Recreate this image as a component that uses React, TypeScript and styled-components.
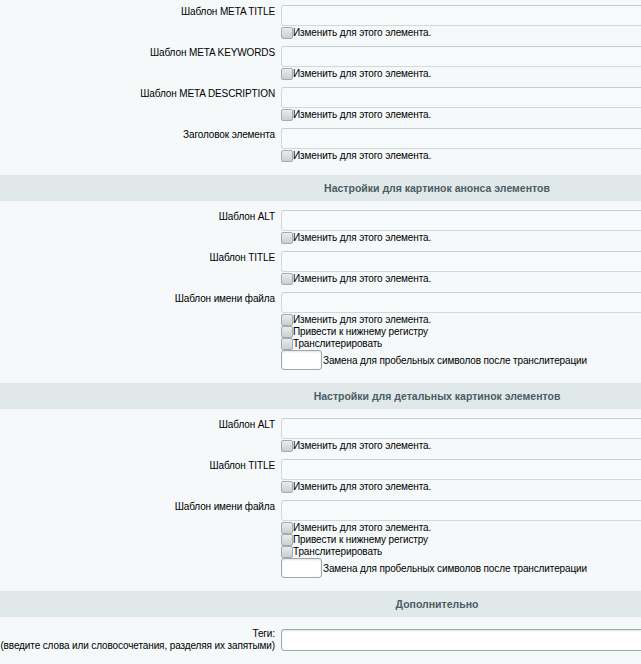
import React from "react";
import styled, { createGlobalStyle } from "styled-components";

const GlobalStyle = createGlobalStyle`
  html, body {
    margin: 0;
    padding: 0;
    background: #f5f9f9;
    overflow: hidden;
  }
  body {
    font-family: "Liberation Sans", Arial, Helvetica, sans-serif;
    font-size: 10px;
    letter-spacing: -0.12px;
    color: #000;
  }
`;

const Form = styled.div`
  width: 874px;
  display: flex;
  flex-direction: column;
`;

const Section = styled.section`
  display: flex;
  flex-direction: column;
  padding-bottom: 11px;
`;

const SectionHeader = styled.div`
  height: 26px;
  margin-bottom: 4px;
  background: #e0e8ea;
  color: #4b5d62;
  font-weight: bold;
  font-size: 10.5px;
  letter-spacing: 0;
  display: flex;
  align-items: center;
  justify-content: center;
`;

const Row = styled.div<{ $center?: boolean }>`
  display: grid;
  grid-template-columns: 281px 1fr;
  align-items: ${(p) => (p.$center ? "center" : "start")};
  padding-top: ${(p) => (p.$center ? "7px" : "0")};
`;

const LabelCell = styled.div<{ $center?: boolean }>`
  text-align: right;
  padding: ${(p) => (p.$center ? "0 6px 0 0" : "6px 6px 0 0")};
  line-height: ${(p) => (p.$center ? "12px" : "12px")};
  white-space: nowrap;
`;

const ValueCell = styled.div<{ $center?: boolean }>`
  display: flex;
  flex-direction: column;
  padding: ${(p) => (p.$center ? "0" : "5px 0 2px")};
`;

const TextInput = styled.input<{ $size?: "wide" | "small" | "tags" }>`
  box-sizing: border-box;
  margin: 0;
  font: inherit;
  padding: 0 4px;
  border-radius: 3px;
  ${(p) =>
    p.$size === "small"
      ? `
    width: 41px;
    height: 20px;
    background: #fff;
    border: 1px solid #9ea7ac;
    box-shadow: inset 0 1px 2px rgba(160,170,175,0.35);
  `
      : p.$size === "tags"
      ? `
    width: 560px;
    height: 22px;
    background: #fff;
    border: 1px solid #9ea7ac;
    box-shadow: inset 0 1px 2px rgba(160,170,175,0.35);
  `
      : `
    width: 560px;
    height: 21px;
    background: #f7fafa;
    border: 1px solid #d2d7da;
    border-top-color: #c8cdd1;
  `}
`;

const CheckLine = styled.label<{ $first?: boolean }>`
  display: flex;
  align-items: center;
  height: 12px;
  margin-top: ${(p) => (p.$first ? "1px" : "0")};
  line-height: 12px;
  white-space: nowrap;
`;

const CheckBox = styled.input.attrs({ type: "checkbox" })`
  appearance: none;
  box-sizing: border-box;
  width: 12px;
  height: 12px;
  margin: 0;
  flex: none;
  border: 1px solid #a3abb0;
  border-radius: 2px;
  background: linear-gradient(#e8ecee, #c9cfd2);
`;

const ReplaceLine = styled.div`
  display: flex;
  align-items: center;
  height: 20px;
  white-space: nowrap;
  gap: 1px;
`;

type FieldProps = {
  label: string;
  extra?: boolean;
};

const Field = ({ label, extra }: FieldProps) => (
  <Row>
    <LabelCell>{label}</LabelCell>
    <ValueCell>
      <TextInput $size="wide" disabled />
      <CheckLine $first>
        <CheckBox />
        Изменить для этого элемента.
      </CheckLine>
      {extra && (
        <>
          <CheckLine>
            <CheckBox />
            Привести к нижнему регистру
          </CheckLine>
          <CheckLine>
            <CheckBox />
            Транслитерировать
          </CheckLine>
          <ReplaceLine>
            <TextInput $size="small" />
            Замена для пробельных символов после транслитерации
          </ReplaceLine>
        </>
      )}
    </ValueCell>
  </Row>
);

const PictureSection = ({ title }: { title: string }) => (
  <Section>
    <SectionHeader>{title}</SectionHeader>
    <Field label="Шаблон ALT" />
    <Field label="Шаблон TITLE" />
    <Field label="Шаблон имени файла" extra />
  </Section>
);

export default function App() {
  return (
    <>
      <GlobalStyle />
      <Form>
        <Section>
          <Field label="Шаблон META TITLE" />
          <Field label="Шаблон META KEYWORDS" />
          <Field label="Шаблон META DESCRIPTION" />
          <Field label="Заголовок элемента" />
        </Section>
        <PictureSection title="Настройки для картинок анонса элементов" />
        <PictureSection title="Настройки для детальных картинок элементов" />
        <Section>
          <SectionHeader>Дополнительно</SectionHeader>
          <Row $center>
            <LabelCell $center>
              Теги:
              <br />
              (введите слова или словосочетания, разделяя их запятыми)
            </LabelCell>
            <ValueCell $center>
              <TextInput $size="tags" />
            </ValueCell>
          </Row>
        </Section>
      </Form>
    </>
  );
}
